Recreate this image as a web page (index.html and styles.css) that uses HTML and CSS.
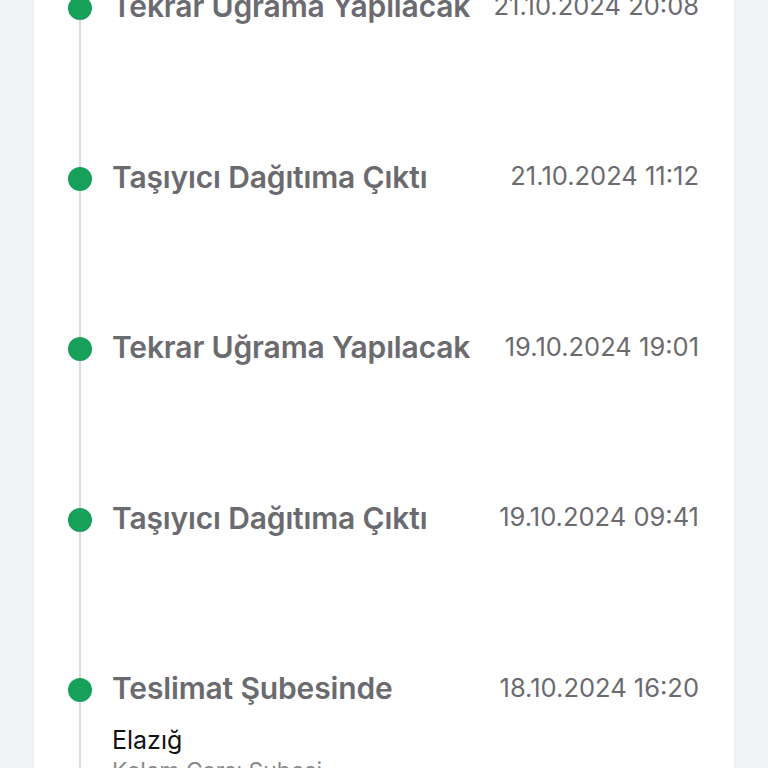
FILE: index.html
```html
<!DOCTYPE html>
<html lang="tr">
<head>
    <meta charset="UTF-8">
    <meta name="viewport" content="width=device-width, initial-scale=1.0">
    <title>Kargo Takip</title>
    <link rel="stylesheet" href="styles.css">
</head>
<body>
    <div class="card">
        <ul class="timeline">
            <li class="event">
                <div class="event-head">
                    <span class="dot"></span>
                    <span class="event-title">Tekrar Uğrama Yapılacak</span>
                    <span class="event-date">21.10.2024 20:08</span>
                </div>
            </li>
            <li class="event">
                <div class="event-head">
                    <span class="dot"></span>
                    <span class="event-title">Taşıyıcı Dağıtıma Çıktı</span>
                    <span class="event-date">21.10.2024 11:12</span>
                </div>
            </li>
            <li class="event">
                <div class="event-head">
                    <span class="dot"></span>
                    <span class="event-title">Tekrar Uğrama Yapılacak</span>
                    <span class="event-date">19.10.2024 19:01</span>
                </div>
            </li>
            <li class="event">
                <div class="event-head">
                    <span class="dot"></span>
                    <span class="event-title">Taşıyıcı Dağıtıma Çıktı</span>
                    <span class="event-date">19.10.2024 09:41</span>
                </div>
            </li>
            <li class="event">
                <div class="event-head">
                    <span class="dot"></span>
                    <span class="event-title">Teslimat Şubesinde</span>
                    <span class="event-date">18.10.2024 16:20</span>
                </div>
                <div class="event-place">Elazığ</div>
                <div class="event-branch">Kalem Çarşı Şubesi</div>
            </li>
        </ul>
    </div>
</body>
</html>
```

FILE: styles.css
```css
body {
    font-family: Inter, "Noto Sans", sans-serif;
    margin: 0;
    padding: 0;
    background-color: #f3f4f6;
    height: 768px;
    overflow: hidden;
}
.card {
    background-color: #ffffff;
    margin: 0 34px;
    height: 768px;
    box-shadow: 0 0 4px rgba(0, 0, 0, 0.08);
    position: relative;
}
/* dikey cizgi */
.card::before {
    content: "";
    position: absolute;
    left: 45px;
    top: 0;
    bottom: 0;
    width: 2px;
    background-color: #dcdcdc;
}
.timeline {
    list-style: none;
    margin: 0;
    padding: 0 35px 0 34px;
    position: relative;
    top: -9px;
}
.event {
    margin-bottom: 136.5px;
}
.event-head {
    display: flex;
    align-items: center;
    height: 34px;
}
.dot {
    width: 24px;
    height: 24px;
    border-radius: 50%;
    background-color: #16a05a;
    flex-shrink: 0;
    position: relative;
}
.event-title {
    margin-left: 20px;
    margin-top: -4px;
    font-size: 30px;
    font-weight: 600;
    color: #6b6b6f;
    flex: 1;
    letter-spacing: -0.15px;
}
.event-date {
    font-size: 25.5px;
    color: #6b6b6f;
    margin-top: -6px;
}
.event-place {
    margin: 16px 0 0 44px;
    font-size: 25px;
    color: #111111;
    line-height: 34px;
}
.event-branch {
    margin-left: 44px;
    font-size: 23px;
    color: #8a8a8e;
}
```
